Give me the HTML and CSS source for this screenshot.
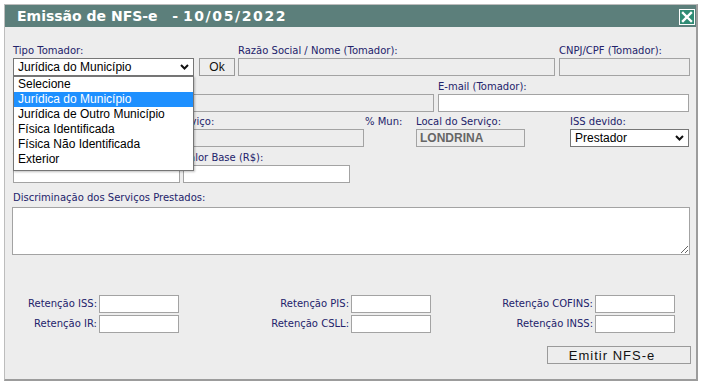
FILE: index.html
```html
<!DOCTYPE html>
<html lang="pt-BR">
<head>
<meta charset="utf-8">
<title>Emissão de NFS-e</title>
<link rel="stylesheet" href="styles.css">
</head>
<body>
<div class="page">
  <div class="dialog">
    <div class="titlebar">
      <span class="title">Emissão de NFS-e   - <span class="date">10/05/2022</span></span>
      <span class="close">
        <svg width="14" height="14" viewBox="0 0 14 14"><path d="M3 3 L11 11 M11 3 L3 11" stroke="#fff" stroke-width="2.4" stroke-linecap="square"/></svg>
      </span>
    </div>
    <div class="content">
      <div class="row r1">
        <div class="field f-tipo">
          <label class="lbl">Tipo Tomador:</label>
          <div class="line">
            <div class="select-wrap">
              <div class="select sel-tipo">
                <span>Jurídica do Município</span>
                <svg class="chev" width="9" height="6" viewBox="0 0 9 6"><path d="M1 1 L4.5 4.5 L8 1" fill="none" stroke="#111" stroke-width="2"/></svg>
              </div>
              <ul class="dropdown">
                <li>Selecione</li>
                <li class="active">Jurídica do Município</li>
                <li>Jurídica de Outro Município</li>
                <li>Física Identificada</li>
                <li>Física Não Identificada</li>
                <li>Exterior</li>
              </ul>
            </div>
            <div class="btn btn-ok">Ok</div>
          </div>
        </div>
        <div class="field f-razao">
          <label class="lbl">Razão Social / Nome (Tomador):</label>
          <div class="inp dis"></div>
        </div>
        <div class="field f-cnpj">
          <label class="lbl">CNPJ/CPF (Tomador):</label>
          <div class="inp dis"></div>
        </div>
      </div>

      <div class="row r2">
        <div class="field f-end">
          <label class="lbl">Endereço (Tomador):</label>
          <div class="inp dis"></div>
        </div>
        <div class="field f-email">
          <label class="lbl">E-mail (Tomador):</label>
          <div class="inp"></div>
        </div>
      </div>

      <div class="row r3">
        <div class="field f-ativ">
          <label class="lbl req">Atividade:</label>
          <div class="inp dis"></div>
        </div>
        <div class="field f-serv">
          <label class="lbl">Serviço:</label>
          <div class="inp dis"></div>
        </div>
        <div class="field f-mun">
          <label class="lbl">% Mun:</label>
        </div>
        <div class="field f-local">
          <label class="lbl">Local do Serviço:</label>
          <div class="inp dis val">LONDRINA</div>
        </div>
        <div class="field f-iss">
          <label class="lbl">ISS devido:</label>
          <div class="select sel-iss">
            <span>Prestador</span>
            <svg class="chev" width="9" height="6" viewBox="0 0 9 6"><path d="M1 1 L4.5 4.5 L8 1" fill="none" stroke="#111" stroke-width="2"/></svg>
          </div>
        </div>
      </div>

      <div class="row r4">
        <div class="field f-vs">
          <label class="lbl">Valor Serviço (R$):</label>
          <div class="inp"></div>
        </div>
        <div class="field f-vb">
          <label class="lbl">Valor Base (R$):</label>
          <div class="inp"></div>
        </div>
      </div>

      <div class="field f-disc">
        <label class="lbl">Discriminação dos Serviços Prestados:</label>
        <textarea class="txt"></textarea>
      </div>

      <div class="ret">
        <span class="rl">Retenção ISS:</span><div class="inp"></div>
        <span class="rl">Retenção PIS:</span><div class="inp"></div>
        <span class="rl">Retenção COFINS:</span><div class="inp"></div>
        <span class="rl">Retenção IR:</span><div class="inp"></div>
        <span class="rl">Retenção CSLL:</span><div class="inp"></div>
        <span class="rl">Retenção INSS:</span><div class="inp"></div>
      </div>

      <div class="actions">
        <div class="btn btn-emit">Emitir NFS-e</div>
      </div>
    </div>
  </div>
</div>
</body>
</html>
```

FILE: styles.css
```css
* { box-sizing: border-box; }
body {
  margin: 0;
  background: #ffffff;
  font-family: "DejaVu Sans", Verdana, sans-serif;
}
.page { padding: 4px 0 0 4px; }
.dialog {
  width: 694px;
  height: 377px;
  background: #ededed;
  border-left: 1px solid #bdbdbd;
  border-top: 1px solid #bdbdbd;
  border-right: 2px solid #9c9c9c;
  border-bottom: 2px solid #9c9c9c;
  display: flex;
  flex-direction: column;
}
.titlebar {
  height: 22px;
  background: #5c7f7b;
  display: flex;
  align-items: center;
  justify-content: space-between;
  padding: 0 1px 0 12px;
}
.title {
  color: #fff;
  font-weight: bold;
  font-size: 14px;
  white-space: pre;
  line-height: 22px;
}
.date { letter-spacing: 1.6px; }
.close {
  width: 16px;
  height: 16px;
  border: 1px solid #fff;
  background: #2f8b74;
  display: flex;
  align-items: center;
  justify-content: center;
  margin-top: 1px;
}
.content {
  padding: 17px 5px 0 8px;
  display: flex;
  flex-direction: column;
}
.row { display: flex; margin-bottom: 4px; }
.r2 { margin-bottom: 3px; }
.field { display: flex; flex-direction: column; }
.lbl {
  font-size: 10px;
  line-height: 14px;
  height: 14px;
  color: #23236b;
  white-space: nowrap;
}
.lbl.req { color: #c0601c; }
.line { display: flex; }
.inp {
  height: 18px;
  border: 1px solid #a3a3a3;
  background: #fff;
}
.inp.dis { background: #ededed; }
.inp.val {
  font-family: "Liberation Sans", Arial, sans-serif;
  font-weight: bold;
  font-size: 12px;
  color: #666;
  line-height: 16px;
  padding-left: 3px;
}
.select {
  height: 18px;
  border: 1px solid #767676;
  background: #fff;
  display: flex;
  align-items: center;
  justify-content: space-between;
  font-family: "Liberation Sans", Arial, sans-serif;
  font-size: 12px;
  color: #000;
  padding: 0 4px 0 4px;
}
.select-wrap { position: relative; width: 181px; }
.sel-tipo { width: 181px; }
.dropdown {
  position: absolute;
  left: 0;
  top: 18px;
  width: 181px;
  margin: 0;
  padding: 0 0 3px 0;
  list-style: none;
  background: #fff;
  border: 1px solid #767676;
  box-shadow: 1px 1px 2px rgba(0,0,0,0.25);
  font-family: "Liberation Sans", Arial, sans-serif;
  font-size: 12px;
  color: #000;
  z-index: 5;
}
.dropdown li {
  height: 15px;
  line-height: 15px;
  padding-left: 4px;
  white-space: nowrap;
}
.dropdown li.active { background: #1e90ff; color: #fff; }
.btn {
  height: 18px;
  border: 1px solid #9a9a9a;
  background: #ededed;
  font-family: "Liberation Sans", Arial, sans-serif;
  font-size: 12px;
  color: #111;
  display: flex;
  align-items: center;
  justify-content: center;
}
.btn-ok { width: 36px; margin-left: 5px; }

.f-tipo { width: 222px; }
.f-razao { width: 317px; margin-left: 3px; }
.f-cnpj { width: 131px; margin-left: 4px; }

.f-end { width: 421px; }
.f-email { width: 251px; margin-left: 4px; }

.f-ativ { width: 157px; }
.f-serv { width: 190px; margin-left: 4px; }
.f-mun { width: 47px; margin-left: 1px; }
.f-local { width: 109px; margin-left: 4px; }
.f-iss { width: 119px; margin-left: 45px; }

.f-vs { width: 167px; }
.f-vb { width: 167px; margin-left: 3px; }

.f-disc { margin-top: 4px; }
.f-disc .lbl { margin-bottom: 2px; }
.txt {
  display: block;
  width: 678px;
  height: 48px;
  margin: 0 0 0 -1px;
  border: 1px solid #a3a3a3;
  background: #fff;
  resize: both;
}

.ret {
  display: grid;
  grid-template-columns: 84px 80px 168px 80px 160px 80px;
  column-gap: 2px;
  row-gap: 2px;
  margin-top: 40px;
  margin-left: 0;
}
.ret .inp { height: 18px; }
.rl {
  font-size: 10px;
  line-height: 18px;
  color: #23236b;
  text-align: right;
  white-space: nowrap;
}
.actions {
  display: flex;
  justify-content: flex-end;
  margin-top: 13px;
  padding-right: 0;
}
.btn-emit {
  width: 144px;
  font-size: 13px;
  letter-spacing: 1px;
  padding-right: 14px;
}
```
